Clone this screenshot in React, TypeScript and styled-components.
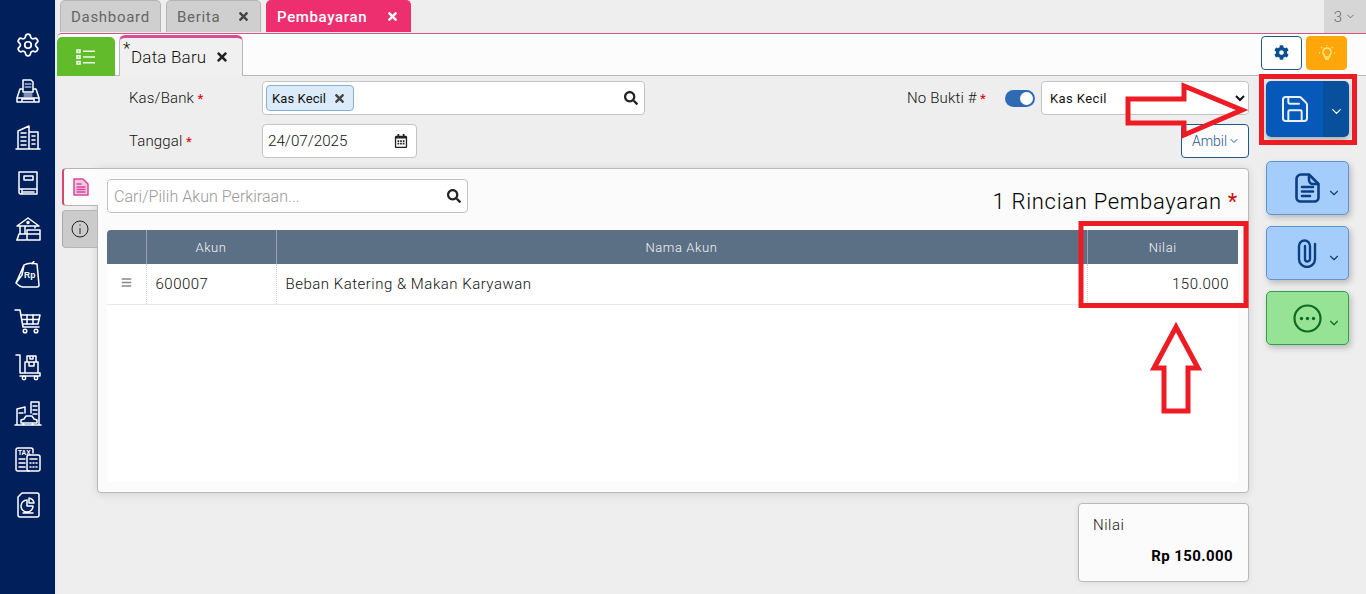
import React from "react";
import styled, { createGlobalStyle } from "styled-components";
import { ChevronDown, Save, Settings } from "lucide-react";
import { FaCog, FaRegCalendarAlt, FaSearch, FaTimes, FaBars } from "react-icons/fa";

const Global = createGlobalStyle`
  html, body { margin: 0; padding: 0; height: 100%; overflow: hidden; }
  body { font-family: Roboto, "Open Sans", sans-serif; font-weight: 300; color: #111; background: #eee; }
  * { box-sizing: border-box; }
`;

const Shell = styled.div`
  position: relative;
  display: flex;
  width: 1366px;
  height: 594px;
  overflow: hidden;
`;
const Sidebar = styled.nav`
  width: 55px;
  flex: none;
  background: #011f5b;
  display: flex;
  flex-direction: column;
  align-items: center;
  padding-top: 31px;
  gap: 18px;
`;
const NavIcon = styled.svg`
  width: 28px;
  height: 28px;
  flex: none;
  fill: none;
  color: #fff;
  stroke: #fff;
  stroke-width: 1.5;
  stroke-linejoin: round;
  stroke-linecap: round;
  text { fill: #fff; stroke: none; font-family: "Liberation Sans", sans-serif; font-weight: 700; }
`;
const Main = styled.main`
  flex: 1;
  min-width: 0;
  display: flex;
  flex-direction: column;
  background: #eee;
  border-left: 2px solid #e4edf4;
`;
const TabBar = styled.div`
  height: 33px;
  flex: none;
  display: flex;
  gap: 5px;
  padding-left: 3px;
`;
const PageTab = styled.div<{ $active?: boolean; $w: number }>`
  width: ${(p) => p.$w}px;
  height: 32px;
  display: flex;
  align-items: center;
  justify-content: space-between;
  padding: 0 ${(p) => (p.$active ? "11px 0 10px" : "10px")};
  font-size: 15px;
  letter-spacing: ${(p) => (p.$active ? "0.65px" : "0.7px")};
  border-radius: 5px 5px 0 0;
  border: 1px solid ${(p) => (p.$active ? "#ee2f6f" : "#b5b5b5")};
  border-bottom: none;
  background: ${(p) => (p.$active ? "#ee2f6f" : "#cfcfcf")};
  color: ${(p) => (p.$active ? "#fff" : "#666")};
  font-weight: ${(p) => (p.$active ? 500 : 400)};
  svg { font-size: 13px; color: ${(p) => (p.$active ? "#fff" : "#444")}; }
`;
const Counter = styled.div`
  margin-left: auto;
  width: 42px;
  background: #d6d6d6;
  color: #666;
  font-size: 15px;
  display: flex;
  align-items: center;
  justify-content: center;
  gap: 3px;
`;
const SubHeader = styled.div`
  height: 43px;
  flex: none;
  background: #fcfcfc;
  border-top: 1px solid #d4557f;
  border-bottom: 1px solid #b9b9b9;
  display: flex;
  align-items: flex-end;
  padding-right: 19px;
  border-top-left-radius: 5px;
`;
const ListButton = styled.div`
  width: 58px;
  height: 39px;
  background: #62bb2b;
  border-radius: 5px 5px 0 0;
  display: flex;
  align-items: center;
  justify-content: center;
  margin-bottom: -1px;
`;
const DocTab = styled.div`
  position: relative;
  width: 124px;
  height: 41px;
  margin-left: 4px;
  margin-bottom: -1px;
  background: #f0f0f0;
  border: 1px solid #b9b9b9;
  border-top: 3px solid #dc4a95;
  border-bottom: none;
  border-radius: 6px 6px 0 0;
  display: flex;
  align-items: center;
  padding: 0 0 0 11px;
  gap: 9px;
  font-size: 17px;
  letter-spacing: 0.2px;
  color: #111;
  svg { font-size: 14px; color: #222; }
`;
const Star = styled.span`
  position: absolute;
  left: 3px;
  top: 0;
  font-size: 17px;
`;
const HeaderTools = styled.div`
  margin-left: auto;
  display: flex;
  gap: 4px;
  align-self: center;
  margin-top: -4px;
`;
const ToolButton = styled.div<{ $accent?: boolean }>`
  width: 41px;
  height: 34px;
  border-radius: 4px;
  display: flex;
  align-items: center;
  justify-content: center;
  background: ${(p) => (p.$accent ? "#ffa70a" : "#fff")};
  border: 1px solid ${(p) => (p.$accent ? "#ffa70a" : "#1d5a8c")};
  color: ${(p) => (p.$accent ? "#ffe98a" : "#0b4f8f")};
`;
const Workspace = styled.div`
  flex: 1;
  display: flex;
  padding-left: 5px;
  min-height: 0;
`;
const Content = styled.div`
  width: 1187px;
  flex: none;
  display: flex;
  flex-direction: column;
`;
const FormRow = styled.div<{ $first?: boolean }>`
  height: 34px;
  display: flex;
  align-items: center;
  padding-left: 67px;
  margin-top: ${(p) => (p.$first ? "5px" : "9px")};
`;
const Label = styled.label<{ $wide?: boolean }>`
  width: ${(p) => (p.$wide ? "98px" : "133px")};
  flex: none;
  font-size: 15px;
  letter-spacing: 0.15px;
  line-height: 32px;
  color: #111;
  font-weight: 300;
  &::after { content: " *"; color: #d11; font-weight: 500; font-size: 13px; }
`;
const Field = styled.div<{ $w: number }>`
  width: ${(p) => p.$w}px;
  height: 34px;
  background: #fff;
  border: 1px solid #c4c4c4;
  border-radius: 4px;
  display: flex;
  align-items: center;
  padding: 0 6px 0 3px;
  justify-content: space-between;
  svg { font-size: 14px; color: #222; }
`;
const Chip = styled.span`
  height: 26px;
  display: inline-flex;
  align-items: center;
  gap: 7px;
  padding: 0 7px 0 5px;
  background: #dcebfa;
  border: 1px solid #87aed3;
  border-radius: 4px;
  font-size: 13px;
  font-weight: 400;
  letter-spacing: 0.1px;
  color: #111;
  svg { font-size: 13px; color: #444; }
`;
const DateText = styled.span`
  font-size: 15.2px;
  padding-left: 2px;
`;
const RightGroup = styled.div`
  margin-left: auto;
  display: flex;
  align-items: center;
`;
const Toggle = styled.span`
  position: relative;
  width: 30px;
  height: 17px;
  border-radius: 9px;
  background: #2f6bb2;
  margin-right: 6px;
  &::after {
    content: "";
    position: absolute;
    right: 2px;
    top: 2px;
    width: 13px;
    height: 13px;
    border-radius: 50%;
    background: #fff;
  }
`;
const Select = styled.select`
  width: 208px;
  height: 34px;
  background: #fff;
  border: 1px solid #c4c4c4;
  border-radius: 4px;
  padding-left: 4px;
  font: 400 13px Roboto, sans-serif;
  letter-spacing: 0.4px;
  color: #111;
`;
const AmbilButton = styled.div`
  margin-left: auto;
  width: 68px;
  height: 34px;
  background: #fdfdfd;
  border: 1px solid #1d5a8c;
  border-radius: 4px;
  color: #1d5a8c;
  font-size: 14px;
  display: flex;
  align-items: center;
  justify-content: center;
  gap: 1px;
  padding-left: 2px;
`;
const PanelRow = styled.div`
  display: flex;
  margin-top: 10px;
  height: 325px;
`;
const SideTabs = styled.div`
  width: 35px;
  flex: none;
  display: flex;
  flex-direction: column;
  gap: 4px;
`;
const SideTab = styled.div<{ $active?: boolean }>`
  height: 38px;
  display: flex;
  align-items: center;
  justify-content: center;
  border-radius: 4px 0 0 4px;
  background: ${(p) => (p.$active ? "#fcfcfc" : "#cbcbcb")};
  border: 1px solid #b5b5b5;
  border-right: none;
  border-left: ${(p) => (p.$active ? "2px solid #d8456f" : "1px solid #aaa")};
  position: relative;
  z-index: 1;
  margin-right: ${(p) => (p.$active ? "-1px" : "0")};
`;
const Panel = styled.section`
  flex: 1;
  min-width: 0;
  background: #fbfbfb;
  border: 1px solid #b9b9b9;
  border-radius: 0 4px 4px 4px;
  box-shadow: 0 1px 8px rgba(0, 0, 0, 0.12);
  padding: 10px 10px 10px 9px;
  display: flex;
  flex-direction: column;
`;
const PanelHead = styled.div`
  height: 51px;
  flex: none;
  display: flex;
  justify-content: space-between;
`;
const SearchField = styled(Field)`
  padding-left: 6px;
`;
const Placeholder = styled.span`
  font-size: 16px;
  letter-spacing: 0.05px;
  color: #999;
`;
const PanelTitle = styled.h2`
  margin: 11px 0 0;
  font-size: 22px;
  font-weight: 300;
  letter-spacing: 0.7px;
  color: #000;
  line-height: 24px;
  span { color: #c11; font-weight: 400; }
`;
const TableWrap = styled.div`
  height: 252px;
  background: #fff;
`;
const Table = styled.table`
  width: 100%;
  border-collapse: collapse;
  table-layout: fixed;
`;
const Th = styled.th<{ $w?: number }>`
  width: ${(p) => (p.$w ? `${p.$w}px` : "auto")};
  height: 34px;
  background: #5b6f85;
  color: #f4f4f4;
  font-weight: 300;
  font-size: 13px;
  letter-spacing: 0.6px;
  border-left: 1px solid #94a3b3;
  padding: 0;
  &:first-child { border-left: none; border-top-left-radius: 4px; }
`;
const Td = styled.td<{ $right?: boolean; $center?: boolean }>`
  height: 40px;
  font-size: 15px;
  letter-spacing: 0.5px;
  color: #111;
  padding: 0 9px 0 9px;
  border-bottom: 1px solid #e9e9e9;
  border-left: 1px dotted #cfcfcf;
  text-align: ${(p) => (p.$right ? "right" : p.$center ? "center" : "left")};
  &:first-child { border-left: none; color: #888; font-size: 11px; padding: 0; }
`;
const Summary = styled.div`
  width: 171px;
  height: 79px;
  margin: 10px 0 0 auto;
  background: #fbfbfb;
  border: 1px solid #b9b9b9;
  border-radius: 4px;
  padding: 12px 15px 0 14px;
  display: flex;
  flex-direction: column;
  box-shadow: 0 1px 6px rgba(0, 0, 0, 0.08);
`;
const SummaryLabel = styled.div`
  font-size: 15px;
  letter-spacing: 0.5px;
`;
const SummaryValue = styled.div`
  margin-top: 13px;
  text-align: right;
  font-size: 15px;
  font-weight: 700;
  letter-spacing: 0.4px;
  color: #000;
`;
const Rail = styled.aside`
  width: 84px;
  margin-left: 17px;
  padding-top: 5px;
  display: flex;
  flex-direction: column;
  flex: none;
`;
const SaveSplit = styled.div`
  width: 83px;
  height: 56px;
  margin-bottom: 24px;
  display: flex;
  border-radius: 5px;
  overflow: hidden;
  box-shadow: 0 3px 7px rgba(0, 0, 0, 0.3);
`;
const SaveMain = styled.div`
  width: 57px;
  background: #0759b9;
  display: flex;
  align-items: center;
  justify-content: center;
  color: #e8f1fb;
`;
const SaveCaret = styled.div`
  flex: 1;
  background: #084f9c;
  display: flex;
  align-items: center;
  justify-content: center;
  padding-top: 5px;
  color: #fff;
`;
const ActionButton = styled.div<{ $green?: boolean }>`
  width: 83px;
  height: 54px;
  margin-bottom: 11px;
  border-radius: 5px;
  display: flex;
  align-items: center;
  justify-content: flex-end;
  gap: 5px;
  padding-right: 7px;
  background: ${(p) => (p.$green ? "#96e396" : "#a4cdfb")};
  border: 1px solid ${(p) => (p.$green ? "#2ba14b" : "#5f93d3")};
  color: ${(p) => (p.$green ? "#0b6b1e" : "#0b3f85")};
  box-shadow: 2px 3px 6px rgba(0, 0, 0, 0.22);
`;
const ActionIcon = styled.span`
  width: 30px;
  display: flex;
  justify-content: center;
`;
const Caret = styled(ChevronDown)`
  margin-top: 10px;
  flex: none;
`;
const Annotations = styled.svg`
  position: absolute;
  left: 0;
  top: 0;
  width: 1366px;
  height: 594px;
  pointer-events: none;
  fill: none;
  stroke: #ed1c24;
  stroke-width: 5;
`;

const Nav = ({ children }: { children: React.ReactNode }) => <NavIcon viewBox="0 0 28 28">{children}</NavIcon>;

const ActionFile = () => (
  <svg width="25" height="30" viewBox="0 0 25 30" fill="none" stroke="currentColor" strokeWidth="2.6" strokeLinejoin="round" strokeLinecap="round">
    <path d="M6 1.5h8l9.5 9.5v13.5a4 4 0 0 1-4 4H5.500a4 4 0 0 1-4-4V6a4.500 4.500 0 0 1 4.500-4.500z" />
    <path d="M14 2v5a4 4 0 0 0 4 4h5" />
    <path d="M7 14h11M7 18.500h11M7 23h8" />
  </svg>
);
const ActionClip = () => (
  <svg width="20" height="30" viewBox="0 0 20 30" fill="none" stroke="currentColor" strokeWidth="2.4" strokeLinecap="round">
    <path d="M18 6v15a8 8 0 0 1-16 0V8a5.500 5.500 0 0 1 11 0v13a2.500 2.500 0 0 1-5 0V8" />
  </svg>
);
const ActionMore = () => (
  <svg width="29" height="29" viewBox="0 0 29 29" fill="none" stroke="currentColor" strokeWidth="2.2">
    <circle cx="14.500" cy="14.500" r="13" />
    <circle cx="8.500" cy="14.500" r="1.700" fill="currentColor" stroke="none" />
    <circle cx="14.500" cy="14.500" r="1.700" fill="currentColor" stroke="none" />
    <circle cx="20.500" cy="14.500" r="1.700" fill="currentColor" stroke="none" />
  </svg>
);

export default function App() {
  return (
    <Shell>
      <Global />
      <Sidebar>
        <Nav><Settings x="1" y="1" width="26" height="26" strokeWidth="1.6" /></Nav>
        <Nav>
          <path d="M3 25h22v-4l-3-9h-3M9 12H6l-3 9v4M3 21h22M9 15V3h8l2 2v10zM8 25v-3h12v3" />
          <path d="M11 7h6M11 10h6M10 17h8M10 19h8" strokeWidth="1" />
        </Nav>
        <Nav>
          <path d="M2 26h24M4 26V8l11-5v23M15 9h9v17" />
          <path d="M7 10h5M7 14h5M7 18h5M7 22h5M18 13h3M18 17h3M18 21h3" />
        </Nav>
        <Nav>
          <path d="M5 3h18v22H7a2 2 0 0 1-2-2zM5 20h18M8 20v5" />
          <path d="M10 7h9v4h-9z" />
          <path d="M9 23h11" />
        </Nav>
        <Nav>
          <path d="M3 11L14 3l11 8zM6 11v8M11 11v8M21 11v2M3 25l2-6h7" />
          <path d="M13 15h13v10H13zM13 19h13" />
          <circle cx="14" cy="7.500" r="1" />
          <path d="M3 25h9" />
        </Nav>
        <Nav>
          <path d="M10 4c3-2 9-2 13-1l2 21a2 2 0 0 1-2 2H9c-3 0-6-3-7-4zM10 4L8 14l-6 8M18 3l2-3" />
          <text x="10" y="17" fontSize="8.500">Rp</text>
        </Nav>
        <Nav>
          <path d="M1 3h5l3 17h16M7 8h19l-2 9H8.500" />
          <path d="M13 8v9M19 8v9M8 12.500h17" />
          <circle cx="11" cy="24" r="1.800" />
          <circle cx="22" cy="24" r="1.800" />
        </Nav>
        <Nav>
          <path d="M2 2h4v18h20v3H6M13 3h9v6h-9zM11 9h13v11H11zM16 3v3h3V3M15 9v4h5V9" />
          <circle cx="10" cy="25" r="1.700" />
          <circle cx="22" cy="25" r="1.700" />
        </Nav>
        <Nav>
          <path d="M1 26h26M3 26V10l8-2v6M17 14V3h8v23M19 7h4M19 11h4M19 15h4M5 14h4" />
          <path d="M7 24v-3l3-1 2-3h6l2 3 3 1v3zM9 25.500h1M18 25.500h1" />
        </Nav>
        <Nav>
          <path d="M19 8V5a2 2 0 0 0-2-2H4a2 2 0 0 0-2 2v19a2 2 0 0 0 2 2h11" />
          <path d="M15 10h9a2 2 0 0 1 2 2v12a2 2 0 0 1-2 2h-9a2 2 0 0 1-2-2V12a2 2 0 0 1 2-2z" />
          <path d="M5 14h6M5 18h6M5 22h6M16 14h7M16 18h1M19 18h1M22 18h1M16 22h1M19 22h1M22 22h1" />
          <text x="4" y="10" fontSize="6.500">TAX</text>
        </Nav>
        <Nav>
          <path d="M8 2h15a2 2 0 0 1 2 2v20a2 2 0 0 1-2 2H6a2 2 0 0 1-2-2V6z" />
          <path d="M13 9a6 6 0 1 0 6 6h-6zM15 7a6 6 0 0 1 5 5h-5zM9 22h10" />
        </Nav>
      </Sidebar>
      <Main>
        <TabBar>
          <PageTab $w={101}>Dashboard</PageTab>
          <PageTab $w={95}>Berita<FaTimes /></PageTab>
          <PageTab $active $w={145}>Pembayaran<FaTimes /></PageTab>
          <Counter>3<ChevronDown size={11} color="#666" /></Counter>
        </TabBar>
        <SubHeader>
          <ListButton>
            <svg width="20" height="20" viewBox="0 0 20 20" fill="none" stroke="#f1fbe9" strokeWidth="1.6">
              <path d="M1 3h3v2.500H1zM1 8.700h3v2.500H1zM1 14.500h3V17H1zM7 4.200h12M7 10h12M7 15.800h12" />
            </svg>
          </ListButton>
          <DocTab>
            <Star>*</Star>
            Data Baru <FaTimes />
          </DocTab>
          <HeaderTools>
            <ToolButton><FaCog size={15} /></ToolButton>
            <ToolButton $accent>
              <svg width="18" height="18" viewBox="0 0 18 18" fill="none" stroke="currentColor" strokeWidth="1.3">
                <path d="M9 4a4 4 0 0 0-2.500 7.200V13h5v-1.800A4 4 0 0 0 9 4zM7 15h4M9 1v1M3 3l1 1M15 3l-1 1M1 9h1M16 9h1" />
              </svg>
            </ToolButton>
          </HeaderTools>
        </SubHeader>
        <Workspace>
          <Content>
            <FormRow $first>
              <Label>Kas/Bank</Label>
              <Field $w={383}>
                <Chip>Kas Kecil <FaTimes /></Chip>
                <FaSearch />
              </Field>
              <RightGroup>
                <Label $wide>No Bukti #</Label>
                <Toggle />
                <Select defaultValue="Kas Kecil"><option>Kas Kecil</option></Select>
              </RightGroup>
            </FormRow>
            <FormRow>
              <Label>Tanggal</Label>
              <Field $w={155}>
                <DateText>24/07/2025</DateText>
                <FaRegCalendarAlt style={{ marginRight: 2 }} />
              </Field>
              <AmbilButton>Ambil<ChevronDown size={12} /></AmbilButton>
            </FormRow>
            <PanelRow>
              <SideTabs>
                <SideTab $active>
                  <svg width="18" height="18" viewBox="0 0 18 18" fill="#f4c8e0" stroke="#d9479b" strokeWidth="1.5" strokeLinejoin="round">
                    <path d="M2 1h9l5 5v11H2z" />
                    <path d="M4.500 6h5M4.500 9h9M4.500 11.500h9M4.500 14h9" strokeWidth="1.400" fill="none" />
                  </svg>
                </SideTab>
                <SideTab>
                  <svg width="18" height="18" viewBox="0 0 18 18" fill="none" stroke="#222" strokeWidth="1">
                    <circle cx="9" cy="9" r="8" />
                    <path d="M9 8v6M9 4.500v1.200" />
                  </svg>
                </SideTab>
              </SideTabs>
              <Panel>
                <PanelHead>
                  <SearchField $w={361}>
                    <Placeholder>Cari/Pilih Akun Perkiraan...</Placeholder>
                    <FaSearch />
                  </SearchField>
                  <PanelTitle>1 Rincian Pembayaran <span>*</span></PanelTitle>
                </PanelHead>
                <TableWrap>
                  <Table>
                    <thead>
                      <tr>
                        <Th $w={39} />
                        <Th $w={130}>Akun</Th>
                        <Th>Nama Akun</Th>
                        <Th $w={151}>Nilai</Th>
                      </tr>
                    </thead>
                    <tbody>
                      <tr>
                        <Td $center><FaBars /></Td>
                        <Td>600007</Td>
                        <Td>Beban Katering &amp; Makan Karyawan</Td>
                        <Td $right>150.000</Td>
                      </tr>
                    </tbody>
                  </Table>
                </TableWrap>
              </Panel>
            </PanelRow>
            <Summary>
              <SummaryLabel>Nilai</SummaryLabel>
              <SummaryValue>Rp 150.000</SummaryValue>
            </Summary>
          </Content>
          <Rail>
            <SaveSplit>
              <SaveMain><Save size={32} strokeWidth={1.5} /></SaveMain>
              <SaveCaret><ChevronDown size={15} strokeWidth={2} /></SaveCaret>
            </SaveSplit>
            <ActionButton><ActionIcon><ActionFile /></ActionIcon><Caret size={14} /></ActionButton>
            <ActionButton><ActionIcon><ActionClip /></ActionIcon><Caret size={14} /></ActionButton>
            <ActionButton $green><ActionIcon><ActionMore /></ActionIcon><Caret size={14} /></ActionButton>
          </Rail>
        </Workspace>
      </Main>
      <Annotations viewBox="0 0 1366 594">
        <rect x="1261.500" y="76.500" width="93" height="66" />
        <rect x="1081" y="223.500" width="165" height="82" />
        <path d="M1128 99h56V86l58 24-58 25v-12h-56z" />
        <path d="M1176 327l22 41h-10v43h-24v-43h-10z" />
      </Annotations>
    </Shell>
  );
}
